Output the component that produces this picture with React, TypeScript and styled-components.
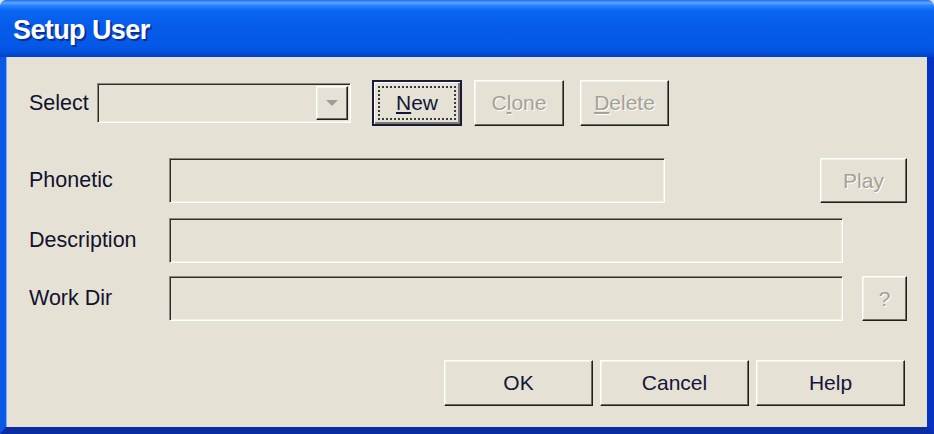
import React from "react";
import styled, { createGlobalStyle, css } from "styled-components";

const Global = createGlobalStyle`
  html, body { margin: 0; padding: 0; background: #E5E2D5; }
  body { width: 934px; height: 434px; overflow: hidden; }
  * { box-sizing: border-box; }
`;

const Window = styled.div`
  width: 934px;
  height: 434px;
  display: flex;
  flex-direction: column;
  font-family: "Liberation Sans", Arial, sans-serif;
`;

const TitleBar = styled.div`
  height: 57px;
  flex: none;
  display: flex;
  align-items: center;
  padding: 4px 0 0 13px;
  border-radius: 6px 6px 0 0;
  background: linear-gradient(
    to bottom,
    #1B6CF0 0%,
    #5FA6FF 5%,
    #2E85FF 9%,
    #0A66F4 18%,
    #055CE8 45%,
    #0558E6 80%,
    #0452E0 90%,
    #0340C8 100%
  );
`;

const Title = styled.span`
  color: #ffffff;
  font-weight: bold;
  font-size: 27px;
  letter-spacing: -0.6px;
  text-shadow: 2px 2px 0 #0A2F9A;
`;

const Frame = styled.div`
  flex: 1;
  display: flex;
  flex-direction: column;
  background: #E5E2D5;
  border-left: 6px solid #0A58E4;
  border-right: 7px solid #0832C4;
  border-bottom: 7px solid #0A2DA4;
  box-shadow: inset 1px 0 0 #7FB0F4;
  padding: 23px 20px 0 23px;
`;

const Row = styled.div<{ $top: number; $h: number }>`
  display: flex;
  align-items: center;
  margin-top: ${(p) => p.$top}px;
  height: ${(p) => p.$h}px;
`;

const Label = styled.span<{ $w: number }>`
  width: ${(p) => p.$w}px;
  flex: none;
  font-size: 21.5px;
  color: #12122E;
`;

const sunken = css`
  border-style: solid;
  border-width: 1px;
  border-color: #8C897C #FFFFFF #FFFFFF #8C897C;
  box-shadow: inset 1px 1px 0 #2E2D28, inset -1px -1px 0 #F2F0E6;
`;

const Field = styled.div<{ $w: number }>`
  ${sunken};
  width: ${(p) => p.$w}px;
  height: 45px;
  flex: none;
  background: #E5E2D5;
`;

const Combo = styled.div`
  ${sunken};
  width: 254px;
  height: 40px;
  flex: none;
  display: flex;
  justify-content: flex-end;
  align-items: center;
  padding: 2px;
`;

const raised = css`
  border-style: solid;
  border-width: 1px;
  border-color: #FFFFFF #1E1E1A #1E1E1A #FFFFFF;
  box-shadow: inset -1px -1px 0 #6E6B60, inset 1px 1px 0 #F3F1E8;
`;

const DropButton = styled.div`
  ${raised};
  width: 32px;
  height: 100%;
  display: flex;
  align-items: center;
  justify-content: center;
`;

const Button = styled.div<{ $w: number; $h?: number; $ml?: number; $disabled?: boolean; $default?: boolean }>`
  ${raised};
  width: ${(p) => p.$w}px;
  height: ${(p) => p.$h ?? 46}px;
  margin-left: ${(p) => (p.$ml === undefined ? "0" : `${p.$ml}px`)};
  flex: none;
  display: flex;
  align-items: center;
  justify-content: center;
  font-size: 21px;
  color: ${(p) => (p.$disabled ? "#A3A196" : "#14143A")};
  text-shadow: ${(p) => (p.$disabled ? "1px 1px 0 #FFFFFF" : "none")};
  ${(p) =>
    p.$default &&
    css`
      border: 2px solid #1A1A3C;
      box-shadow: inset 1px 1px 0 #FFFFFF, inset -2px -2px 0 #7E7B70;
      padding: 4px;
    `}
`;

const PushRight = styled.div`
  margin-left: auto;
`;

const FocusRing = styled.span`
  flex: 1;
  align-self: stretch;
  display: flex;
  align-items: center;
  justify-content: center;
  border: 2px dotted #3A3A44;
`;

const ButtonBar = styled.div`
  display: flex;
  justify-content: flex-end;
  gap: 7px;
  padding-right: 2px;
  margin-top: 39px;
`;

export default function App() {
  return (
    <>
      <Global />
      <Window>
        <TitleBar>
          <Title>Setup User</Title>
        </TitleBar>
        <Frame>
          <Row $top={0} $h={46}>
            <Label $w={68}>Select</Label>
            <Combo>
              <DropButton>
                <svg width="12" height="7" viewBox="0 0 12 7">
                  <polygon points="0,0 12,0 6,6" fill="#A09E94" />
                </svg>
              </DropButton>
            </Combo>
            <Button $w={90} $ml={21} $default>
              <FocusRing>
                <span>
                  <u>N</u>ew
                </span>
              </FocusRing>
            </Button>
            <Button $w={90} $ml={12} $disabled>
              <span>
                C<u>l</u>one
              </span>
            </Button>
            <Button $w={89} $ml={16} $disabled>
              <span>
                <u>D</u>elete
              </span>
            </Button>
          </Row>
          <Row $top={32} $h={45}>
            <Label $w={140}>Phonetic</Label>
            <Field $w={496} />
            <PushRight />
            <Button $w={87} $h={45} $disabled>
              Play
            </Button>
          </Row>
          <Row $top={15} $h={45}>
            <Label $w={140}>Description</Label>
            <Field $w={674} />
          </Row>
          <Row $top={13} $h={45}>
            <Label $w={140}>Work Dir</Label>
            <Field $w={674} />
            <PushRight />
            <Button $w={45} $h={45} $disabled>
              ?
            </Button>
          </Row>
          <ButtonBar>
            <Button $w={149}>OK</Button>
            <Button $w={149}>Cancel</Button>
            <Button $w={149}>Help</Button>
          </ButtonBar>
        </Frame>
      </Window>
    </>
  );
}
